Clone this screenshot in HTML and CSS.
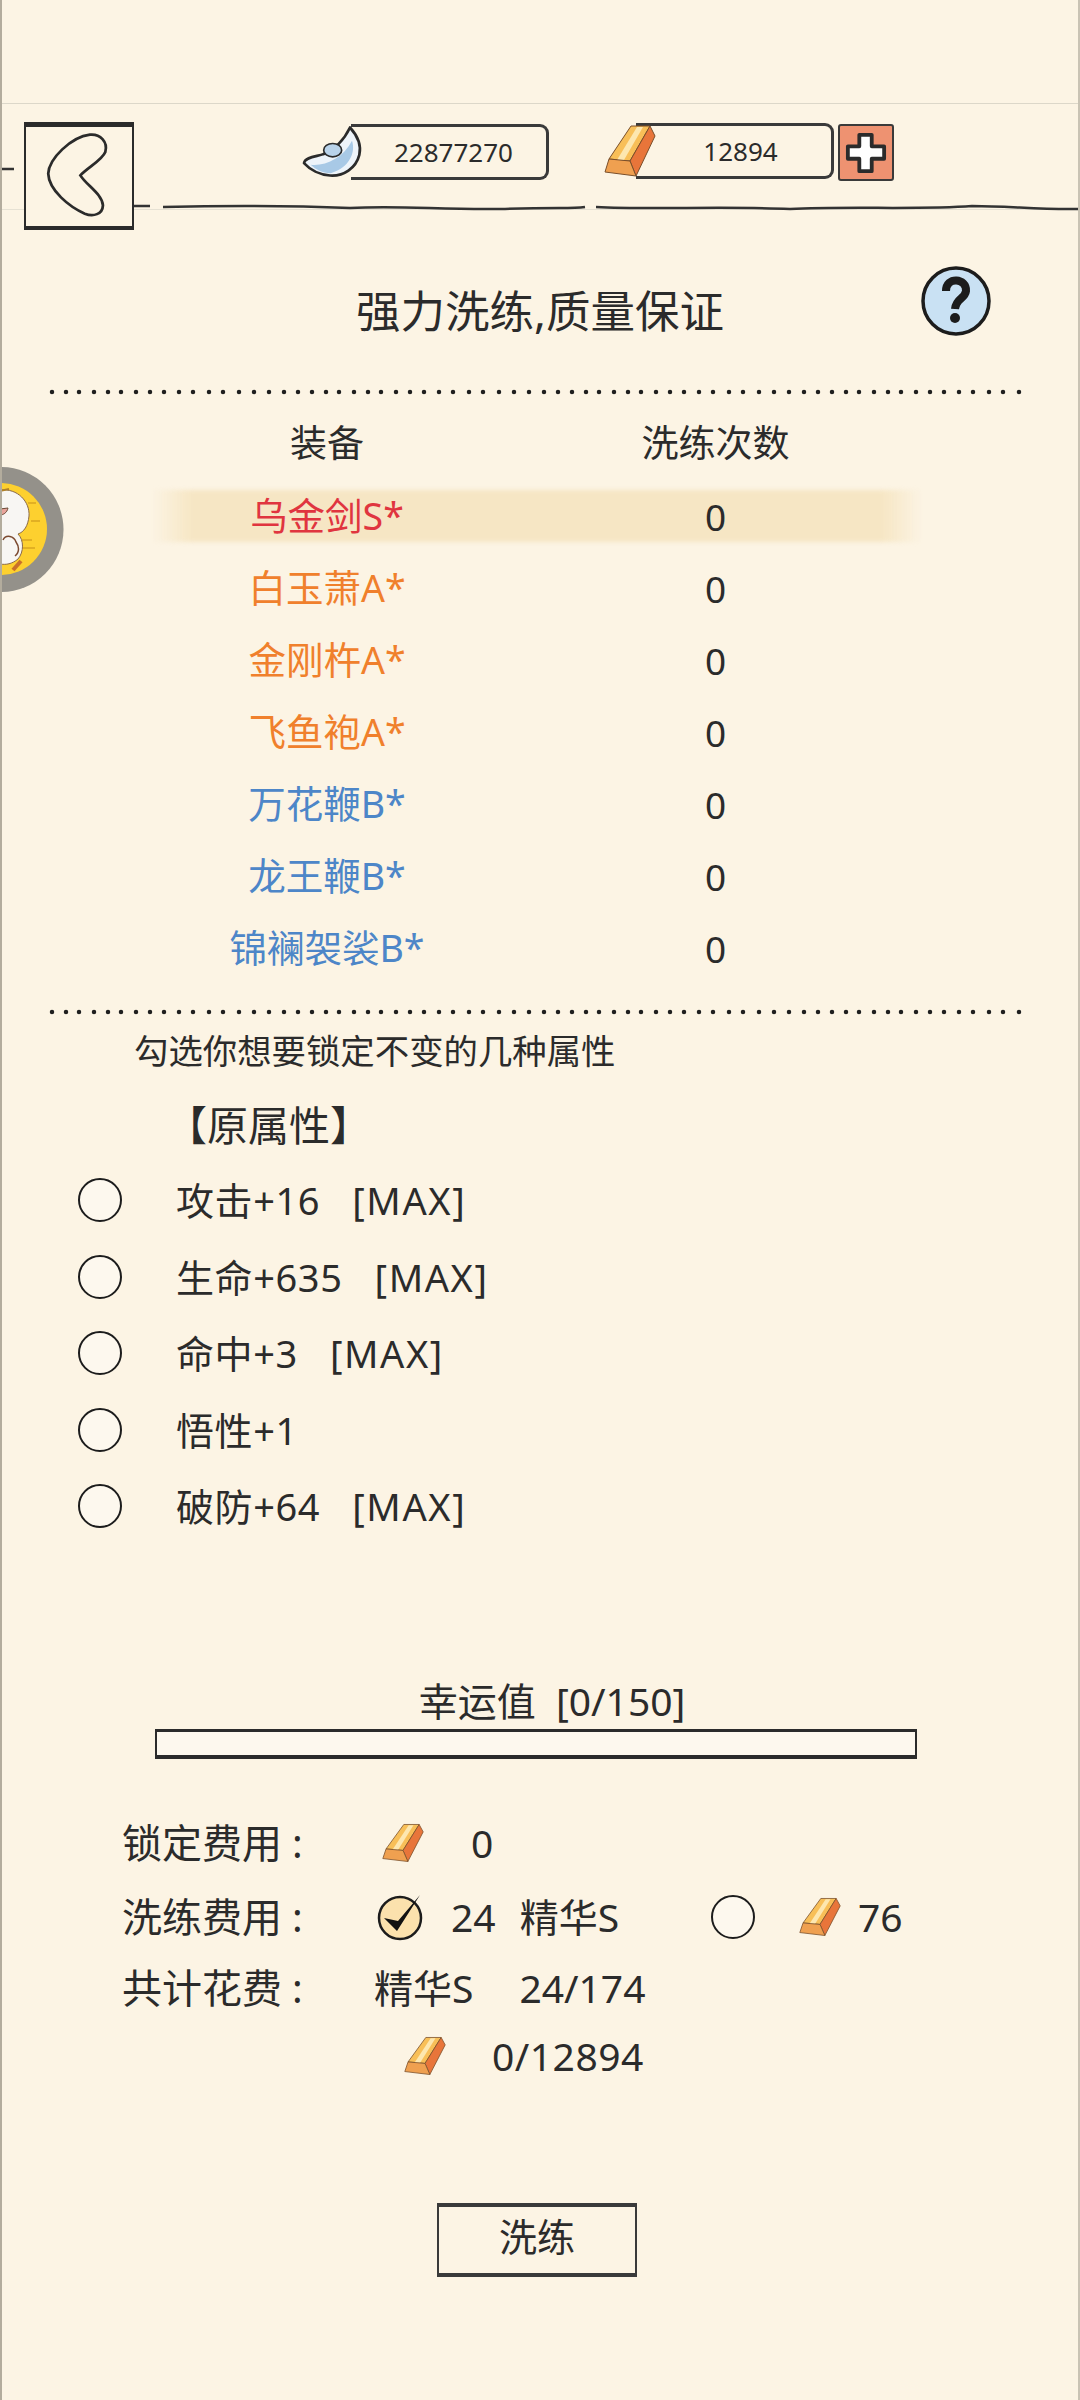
FILE: index.html
```html
<!DOCTYPE html>
<html lang="zh-CN">
<head>
  <meta charset="UTF-8" />
  <meta name="viewport" content="width=device-width, initial-scale=1.0"/>
  <title>强力洗练</title>
  <link rel="stylesheet" href="styles.css">
</head>
<body>
  <svg class="defs" width="0" height="0">
    <symbol id="gold" viewBox="0 0 52 54" preserveAspectRatio="none">
      <g stroke="#7a4f2a" stroke-width="1" stroke-linejoin="round">
        <polygon points="27,2 46,2 26,37 5,35" fill="#f8bf58"/>
        <polygon points="33,3 39,3 20,36 13,36" fill="#fde7b0" stroke="none"/>
        <polygon points="46,2 51,12 32,52 26,37" fill="#e8753a"/>
        <polygon points="5,35 26,37 32,52 1,48" fill="#efa050"/>
      </g>
    </symbol>
    <symbol id="dots" viewBox="0 0 1080 20" preserveAspectRatio="none">
      <line x1="52" y1="10" x2="1026" y2="10" stroke="#1f1f1f" stroke-width="4.5" stroke-linecap="round"
        stroke-dasharray="0 14 0 13 0 15 0 14 0 13 0 15 0 14 0 14 0 15 0 14 0 16 0 14 0 16 0 15 0 15 0 15 0 14 0 14"/>
    </symbol>
  </svg>

  <div class="page">
    <div class="status-space"></div>

    <header class="header">
      <svg class="rule" width="1080" height="20" viewBox="0 0 1080 20">
        <path d="M0 -33 H14 M134 4 H150 M163 5 C250 3 300 4 350 6 C400 3 440 8 500 7 C560 5 570 7 585 5 M596 5 C650 8 720 4 790 7 C850 4 920 8 972 4 C1010 4 1040 8 1080 7" fill="none" stroke="#333" stroke-width="2.5"/>
      </svg>
      <button class="back-btn">
        <svg width="106" height="99" viewBox="78 110 310 297" preserveAspectRatio="none">
          <path d="M265 133C295 130 318 155 310 185C300 210 260 230 237 255C255 285 300 310 303 345C302 372 275 380 250 370C205 350 145 300 143 250C145 205 210 140 265 133Z" fill="none" stroke="#2b2b2b" stroke-width="8"/>
        </svg>
      </button>
      <div class="chip chip-silver">
        <svg class="chip-icon" width="65" height="57" viewBox="30 25 195 170">
          <path d="M180 38C200 60 215 90 208 120C198 160 160 185 120 182C90 180 60 165 42 145C45 125 85 125 100 118C130 105 160 80 180 38Z" fill="#eef4fa" stroke="#2b2b2b" stroke-width="8" stroke-linejoin="round"/>
          <path d="M62 150C105 155 160 130 186 78C198 112 178 160 122 175C97 175 78 165 62 150Z" fill="#a8c9e6"/>
          <ellipse cx="128" cy="106" rx="27" ry="20" fill="#b9d3ea" stroke="#2b2b2b" stroke-width="5"/>
        </svg>
        <span class="chip-box">22877270</span>
      </div>
      <div class="chip chip-gold">
        <svg class="chip-icon" width="52" height="54"><use href="#gold"/></svg>
        <span class="chip-box">12894</span>
      </div>
      <button class="plus-btn">
        <svg width="42" height="42" viewBox="0 0 44 44">
          <path d="M15 3H28V15H41V28H28V41H15V28H3V15H15Z" fill="#fff" stroke="#2b2b2b" stroke-width="4" stroke-linejoin="round"/>
        </svg>
      </button>
    </header>

    <div class="title-row">
      <h2>强力洗练,质量保证</h2>
      <svg class="help" width="72" height="72" viewBox="0 0 72 72">
        <circle cx="36" cy="36" r="33" fill="#c9e1f3" stroke="#1c1c1c" stroke-width="3.5"/>
        <path d="M26 26C26 11 47 13 46 26C45 34 36 33 35 44" fill="none" stroke="#1c1c1c" stroke-width="8"/>
        <circle cx="35" cy="53" r="5" fill="#1c1c1c"/>
      </svg>
    </div>

    <svg class="dots"><use href="#dots"/></svg>

    <div class="equip-table">
      <div class="equip-row equip-head"><span>装备</span><span>洗练次数</span></div>
      <div class="equip-row selected red"><span>乌金剑S*</span><span class="count">0</span></div>
      <div class="equip-row orange"><span>白玉萧A*</span><span class="count">0</span></div>
      <div class="equip-row orange"><span>金刚杵A*</span><span class="count">0</span></div>
      <div class="equip-row orange"><span>飞鱼袍A*</span><span class="count">0</span></div>
      <div class="equip-row blue"><span>万花鞭B*</span><span class="count">0</span></div>
      <div class="equip-row blue"><span>龙王鞭B*</span><span class="count">0</span></div>
      <div class="equip-row blue"><span>锦襕袈裟B*</span><span class="count">0</span></div>
    </div>

    <svg class="dots dots-second"><use href="#dots"/></svg>

    <p class="hint">勾选你想要锁定不变的几种属性</p>
    <h3 class="attr-head">【原属性】</h3>

    <ul class="attr-list">
      <li><i class="radio"></i><span class="attr-name">攻击+16</span><span class="max">[MAX]</span></li>
      <li><i class="radio"></i><span class="attr-name">生命+635</span><span class="max">[MAX]</span></li>
      <li><i class="radio"></i><span class="attr-name">命中+3</span><span class="max">[MAX]</span></li>
      <li><i class="radio"></i><span class="attr-name">悟性+1</span></li>
      <li><i class="radio"></i><span class="attr-name">破防+64</span><span class="max">[MAX]</span></li>
    </ul>

    <div class="luck-label">幸运值&nbsp;&nbsp;[0/150]</div>
    <div class="luck-bar"></div>

    <div class="costs">
      <div class="cost-row">
        <span class="cost-label">锁定费用<b>:</b></span>
        <svg class="gold-sm first" width="42" height="40"><use href="#gold"/></svg>
        <span class="lock-num">0</span>
      </div>
      <div class="cost-row">
        <span class="cost-label">洗练费用<b>:</b></span>
        <svg class="check" width="48" height="48" viewBox="0 0 48 48">
          <circle cx="24" cy="25" r="21" fill="#fbe1ad" stroke="#1c1c1c" stroke-width="2.5"/>
          <path d="M8 25L21 38L44 2L22 28Z" fill="#111"/>
        </svg>
        <span class="cost-num">24</span>
        <span class="cost-item">精华S</span>
        <i class="radio radio-cost"></i>
        <svg class="gold-sm alt" width="42" height="40"><use href="#gold"/></svg>
        <span class="alt-num">76</span>
      </div>
      <div class="cost-row">
        <span class="cost-label">共计花费<b>:</b></span>
        <span>精华S</span>
        <span class="total-num">24/174</span>
      </div>
      <div class="cost-row">
        <span class="cost-label"></span>
        <svg class="gold-sm last" width="42" height="40"><use href="#gold"/></svg>
        <span class="gold-total">0/12894</span>
      </div>
    </div>

    <button class="wash-btn">洗练</button>

    <!-- floating mascot on the left edge -->
    <svg class="mascot" width="64" height="126" viewBox="0 7 64 126">
      <circle cx="1" cy="69.5" r="62.5" fill="#94918a"/>
      <circle cx="1" cy="69" r="46" fill="#fdd02f"/>
      <g stroke="#d9a521" stroke-width="1.5" fill="none">
        <path d="M28 43H36M31 61H40M22 80H32M22 88H35"/>
      </g>
      <path d="M0 30C18 28 30 42 29 56C28 66 24 72 18 74C24 80 24 92 18 99C12 104 6 105 0 104Z" fill="#f8f6f3" stroke="#8a6a4a" stroke-width="1"/>
      <path d="M0 49L8 48C7 53 3 55 0 55" fill="#e9a49c" stroke="#6b4a35" stroke-width="1"/>
      <path d="M3 80C6 74 14 76 16 82C19 86 20 92 15 96" fill="none" stroke="#7c4a30" stroke-width="1.5"/>
      <path d="M0 31L9 29" stroke="#b08028" stroke-width="2"/>
      <path d="M13 110L21 101" stroke="#c9702b" stroke-width="4"/>
    </svg>
  </div>
</body>
</html>
```

FILE: styles.css
```css
* {
  box-sizing: border-box;
}

body {
  margin: 0;
  font-family: "Noto Sans", "Noto Sans CJK SC", sans-serif;
  color: #2b2b2b;
  background-color: #fcf4e4;
}

.defs {
  position: absolute;
}

.page {
  position: relative;
  width: 1080px;
  height: 2400px;
  overflow: hidden;
  border-left: 2px solid #b3ac9d;
  border-right: 2px solid #c9c3b4;
}

.status-space {
  height: 104px;
  border-bottom: 1px solid #dcd7c9;
}

/* header */
.header {
  position: relative;
  display: flex;
  align-items: flex-start;
  height: 136px;
  margin-left: -2px;
}

.header::after {
  content: "";
  position: absolute;
  top: 105px;
  left: 0;
  right: 0;
  border-top: 1px solid #e6e1d3;
}

.rule {
  position: absolute;
  top: 98px;
  left: 0;
  z-index: 1;
  overflow: visible;
}

.back-btn {
  position: relative;
  z-index: 2;
  width: 110px;
  height: 108px;
  margin: 18px 0 0 24px;
  padding: 0;
  display: flex;
  align-items: center;
  justify-content: center;
  background: #fcf4e4;
  border: 2px solid #2b2b2b;
  border-top-width: 5px;
  border-bottom-width: 4px;
  border-radius: 0;
}

.chip {
  position: relative;
  z-index: 2;
  display: flex;
  align-items: center;
  margin-top: 19px;
}

.chip-silver {
  margin-left: 166px;
}

.chip-gold {
  margin-left: 55px;
}

.chip-icon {
  position: relative;
  z-index: 1;
  flex: none;
}

.chip-box {
  height: 56px;
  display: flex;
  align-items: center;
  justify-content: center;
  font-size: 26px;
  border-top: 3px solid #3a3a3a;
  border-bottom: 3px solid #3a3a3a;
  border-right: 3px solid #3a3a3a;
  border-radius: 0 9px 9px 0;
}

.chip-silver .chip-box {
  width: 198px;
  margin-left: -14px;
  padding-left: 10px;
}

.chip-gold .chip-box {
  width: 198px;
  margin-left: -20px;
  padding-left: 14px;
}

.plus-btn {
  position: relative;
  z-index: 2;
  width: 56px;
  height: 57px;
  margin: 20px 0 0 4px;
  padding: 0;
  display: flex;
  align-items: center;
  justify-content: center;
  background: #ee9271;
  border: 2px solid #3a3a3a;
  border-radius: 3px;
}

/* title */
.title-row {
  position: relative;
  height: 142px;
  display: flex;
  align-items: center;
  justify-content: center;
}

.title-row h2 {
  margin: 0;
  font-size: 44.5px;
  font-weight: 400;
  line-height: 1;
}

.help {
  position: absolute;
  top: 25px;
  left: 918px;
}

.dots {
  display: block;
  width: 1080px;
  height: 20px;
  margin-left: -2px;
}

.dots-second {
  margin-top: 18px;
}

/* equipment table */
.equip-row {
  display: grid;
  grid-template-columns: 650px 130px;
  height: 72px;
  align-items: center;
  font-size: 37.5px;
  line-height: 1;
}

.equip-row span {
  text-align: center;
  white-space: nowrap;
}

.equip-row span:first-child {
  justify-self: center;
}

.equip-row span:last-child {
  grid-column: 2;
  display: block;
  margin-left: -127px;
  width: 381px;
  justify-self: start;
}

.equip-head {
  height: 78px;
  padding-top: 3px;
  font-size: 37px;
}

.selected {
  position: relative;
}

.selected::before {
  content: "";
  position: absolute;
  top: 10px;
  left: 150px;
  width: 770px;
  height: 52px;
  background: linear-gradient(90deg, transparent, #f6e6c4 40px, #f6e6c4 730px, transparent);
  filter: blur(2px);
}

.selected span {
  position: relative;
}

.red {
  color: #e0353f;
}

.orange {
  color: #f0802c;
}

.blue {
  color: #4d86c8;
}

.equip-row .count {
  color: #2b2b2b;
  font-size: 37px;
}

/* attributes */
.hint {
  margin: 0;
  height: 60px;
  padding-left: 132px;
  font-size: 34.4px;
  line-height: 58px;
}

.attr-head {
  margin: 0;
  height: 80px;
  padding: 6px 0 0 164px;
  font-size: 41px;
  font-weight: 400;
  line-height: 74px;
}

.attr-list {
  margin: 0;
  padding: 0 0 0 76px;
  list-style: none;
}

.attr-list li {
  display: flex;
  align-items: center;
  height: 76.5px;
  font-size: 38px;
  line-height: 1;
}

.radio {
  display: block;
  flex: none;
  width: 44px;
  height: 44px;
  border: 2.5px solid #1c1c1c;
  border-radius: 50%;
  background: #fdf8ee;
}

.attr-name {
  margin-left: 54px;
  letter-spacing: 0.6px;
}

.max {
  margin-left: 32px;
  letter-spacing: 1.6px;
}

/* luck */
.luck-label {
  margin-top: 129px;
  height: 55px;
  padding-left: 24px;
  font-size: 39px;
  line-height: 53px;
  text-align: center;
}

.luck-bar {
  width: 762px;
  height: 30px;
  margin-left: 153px;
  background: #fdf8ee;
  border: 2px solid #2b2b2b;
  border-top-width: 3px;
  border-bottom-width: 4px;
}

/* costs */
.costs {
  display: grid;
  grid-template-rows: 74px 74px 68px 68px;
  margin-top: 47px;
  padding-left: 120px;
  font-size: 39px;
  line-height: 1;
}

.cost-row {
  display: flex;
  align-items: center;
  white-space: nowrap;
}

.cost-label {
  flex: none;
  width: 252px;
  font-size: 40px;
}

.cost-label b {
  margin-left: 10px;
  font-weight: 400;
}

.gold-sm.first {
  margin-left: 8px;
}

.lock-num {
  margin-left: 47px;
}

.check {
  margin-left: 2px;
}

.cost-num {
  margin-left: 27px;
}

.cost-item {
  margin-left: 24px;
}

.radio-cost {
  margin-left: 92px;
}

.gold-sm.alt {
  margin-left: 44px;
}

.alt-num {
  margin-left: 17px;
}

.total-num {
  margin-left: 46px;
}

.gold-sm.last {
  margin-left: 30px;
}

.gold-total {
  margin-left: 46px;
  letter-spacing: 0.5px;
}

.wash-btn {
  display: block;
  width: 200px;
  height: 74px;
  margin: 113px 0 0 435px;
  padding: 0 0 10px;
  font-family: inherit;
  font-size: 38px;
  color: #2b2b2b;
  background: transparent;
  border: 2px solid #3a3a3a;
  border-top-width: 4px;
  border-bottom-width: 4px;
  border-radius: 0;
}

.mascot {
  position: absolute;
  top: 467px;
  left: -2px;
  z-index: 3;
}
```
